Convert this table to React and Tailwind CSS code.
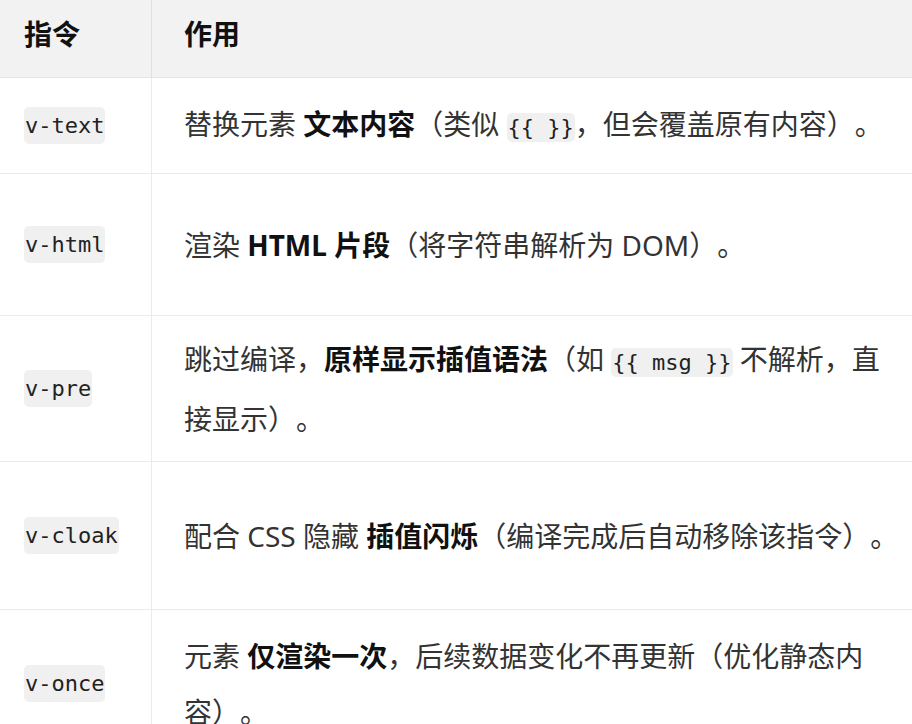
import React from "react";

const Code = ({ children }) => (
  <code className="rounded-[5px] bg-[#f0f0f0] px-[1px] py-[2px] font-['DejaVu_Sans_Mono',monospace] text-[22px] text-[#222] whitespace-pre">
    {children}
  </code>
);

const B = ({ children }) => <strong className="font-bold text-[#111]">{children}</strong>;

const rows = [
  {
    h: "h-[96px]",
    cmd: "v-text",
    desc: (
      <>
        替换元素 <B>文本内容</B>（类似 <Code>{"{{ }}"}</Code>，但会覆盖原有内容）。
      </>
    ),
  },
  {
    h: "h-[142px]",
    cmd: "v-html",
    desc: (
      <>
        渲染 <B>HTML 片段</B>（将字符串解析为 DOM）。
      </>
    ),
  },
  {
    h: "h-[146px]",
    cmd: "v-pre",
    desc: (
      <>
        跳过编译，<B>原样显示插值语法</B>（如 <Code>{"{{ msg }}"}</Code> 不解析，直
        <br />
        接显示）。
      </>
    ),
  },
  {
    h: "h-[148px]",
    cmd: "v-cloak",
    desc: (
      <>
        配合 CSS 隐藏 <B>插值闪烁</B>（编译完成后自动移除该指令）。
      </>
    ),
  },
  {
    h: "h-[148px]",
    cmd: "v-once",
    desc: (
      <>
        元素 <B>仅渲染一次</B>，后续数据变化不再更新（优化静态内
        <br />
        容）。
      </>
    ),
  },
];

export default function App() {
  return (
    <div className="w-[912px] h-[724px] overflow-hidden bg-white font-['Noto_Sans','Noto_Sans_CJK_SC',sans-serif] text-[28px] text-[#333] [text-spacing-trim:space-all]">
      <div className="flex h-[78px] bg-[#f2f2f2] border-b border-[#e3e3e3]">
        <div className="w-[152px] shrink-0 border-r border-[#e0e0e0] pl-[24px] pb-[10px] flex items-center font-bold text-[#111]">
          指令
        </div>
        <div className="flex-1 pl-[32px] pb-[10px] flex items-center font-bold text-[#111]">作用</div>
      </div>
      {rows.map((r) => (
        <div key={r.cmd} className={`flex ${r.h} border-b border-[#ebebeb]`}>
          <div className="w-[152px] shrink-0 border-r border-[#ebebeb] pl-[24px] flex items-center">
            <Code>{r.cmd}</Code>
          </div>
          <div className="flex-1 pl-[32px] flex items-center">
            <div className="leading-[56px] whitespace-nowrap">{r.desc}</div>
          </div>
        </div>
      ))}
    </div>
  );
}
